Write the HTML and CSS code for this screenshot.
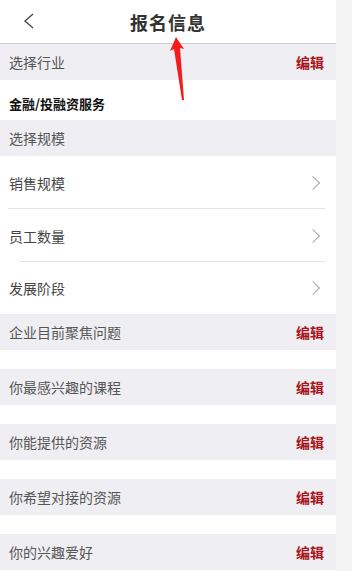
FILE: index.html
```html
<!DOCTYPE html>
<html lang="zh-CN">
<head>
    <meta charset="UTF-8">
    <meta name="viewport" content="width=device-width, initial-scale=1.0">
    <title>报名信息</title>
    <link rel="stylesheet" href="styles.css">
</head>
<body>
    <div class="page">
        <header class="topbar">
            <a class="back" href="#">
                <svg width="12" height="16" viewBox="0 0 12 16"><path d="M10 1 L2 8 L10 15" fill="none" stroke="#444" stroke-width="1.3"/></svg>
            </a>
            <h1>报名信息</h1>
        </header>

        <div class="section">
            <span>选择行业</span>
            <a class="edit" href="#">编辑</a>
        </div>
        <div class="value">金融/投融资服务</div>

        <div class="section">
            <span>选择规模</span>
        </div>
        <ul class="list">
            <li class="line-full">销售规模 <i class="arrow"></i></li>
            <li class="line-inset">员工数量 <i class="arrow"></i></li>
            <li class="last">发展阶段 <i class="arrow"></i></li>
        </ul>

        <div class="section">
            <span>企业目前聚焦问题</span>
            <a class="edit" href="#">编辑</a>
        </div>
        <div class="spacer"></div>
        <div class="section">
            <span>你最感兴趣的课程</span>
            <a class="edit" href="#">编辑</a>
        </div>
        <div class="spacer"></div>
        <div class="section">
            <span>你能提供的资源</span>
            <a class="edit" href="#">编辑</a>
        </div>
        <div class="spacer"></div>
        <div class="section">
            <span>你希望对接的资源</span>
            <a class="edit" href="#">编辑</a>
        </div>
        <div class="spacer"></div>
        <div class="section">
            <span>你的兴趣爱好</span>
            <a class="edit" href="#">编辑</a>
        </div>
    </div>

    <!-- red annotation arrow -->
    <svg class="mark" width="30" height="70" viewBox="160 32 30 70">
        <polygon points="176,37 184,49 180,48 184,100 182,100 174,49 170,51" fill="#f21c1c"/>
    </svg>
</body>
</html>
```

FILE: styles.css
```css
body {
    margin: 0;
    padding: 0;
    background-color: #f3f3f3;
    font-family: "Noto Sans CJK SC", "Noto Sans", sans-serif;
    font-size: 14px;
    color: #555;
}

.page {
    width: 336px;
    min-height: 571px;
    background-color: #fff;
}

.topbar {
    height: 43px;
    border-bottom: 1px solid #cfcfcf;
    display: flex;
    align-items: center;
    justify-content: center;
    position: relative;
}

.topbar h1 {
    margin: 0;
    font-size: 18px;
    font-weight: bold;
    color: #333;
    letter-spacing: 1px;
}

.back {
    position: absolute;
    left: 23px;
    top: 13px;
}

.section {
    height: 36px;
    background-color: #efeff3;
    display: flex;
    align-items: center;
    justify-content: space-between;
    padding: 0 12px 0 9px;
}

.edit {
    color: #a8141a;
    font-weight: bold;
    text-decoration: none;
}

.value {
    height: 40px;
    line-height: 47px;
    padding-left: 9px;
    color: #111;
    font-weight: bold;
    font-size: 13px;
}

.list {
    list-style: none;
    margin: 0;
    padding: 0;
}

.list li {
    height: 53px;
    display: flex;
    align-items: center;
    justify-content: space-between;
    padding: 0 16px 0 9px;
    color: #444;
    position: relative;
}

.list li.last {
    height: 52px;
}

.list li.line-full::after,
.list li.line-inset::after {
    content: "";
    position: absolute;
    right: 11px;
    bottom: 0;
    height: 1px;
    background-color: #e2e2e2;
}

.list li.line-full::after {
    left: 8px;
}

.list li.line-inset::after {
    left: 20px;
}

.arrow {
    width: 9px;
    height: 9px;
    border-top: 1px solid #aaa;
    border-right: 1px solid #aaa;
    transform: rotate(45deg);
    margin-right: 2px;
}

.spacer {
    height: 19px;
}

.mark {
    position: absolute;
    left: 160px;
    top: 32px;
}
```
